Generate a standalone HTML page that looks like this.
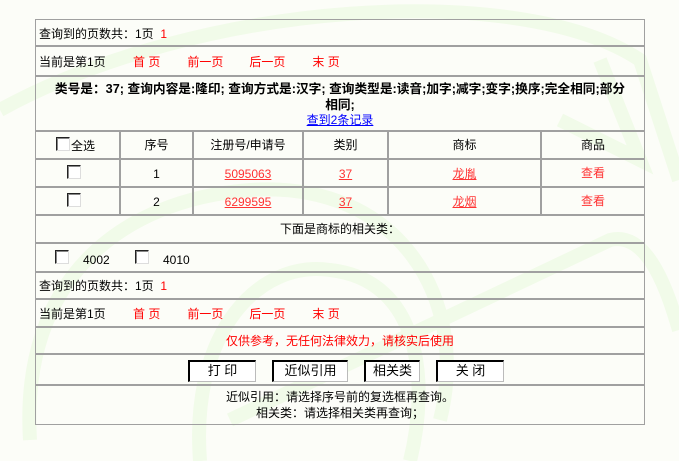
<!DOCTYPE html>
<html><head><meta charset="utf-8"><style>
*{margin:0;padding:0;box-sizing:border-box}
body{width:679px;height:461px;background:#fcfdf8;position:relative;overflow:hidden;font:12px "Liberation Sans","Noto Sans CJK SC","WenQuanYi Zen Hei",sans-serif;color:#000}
.h{position:absolute;left:35px;width:610px;height:2px;background:#a0a0a0}
.v{position:absolute;width:2px;background:#a0a0a0}
.t{position:absolute;white-space:nowrap;line-height:14px}
.r{color:#f00}
.a{color:#f33;text-decoration:underline}
.cb{position:absolute;width:14px;height:14px;border-top:1px solid #222;border-left:1px solid #222;border-right:1px solid #ddd;border-bottom:1px solid #ddd;background:#fff;box-shadow:inset 1px 1px 0 #888}
.btn{position:absolute;height:22px;border-top:2px solid #000;border-left:2px solid #000;border-right:1px solid #bbb;border-bottom:1px solid #bbb;background:#fff;text-align:center;line-height:17px;font-size:13px}
.c{text-align:center}
</style></head><body>
<svg width="679" height="461" style="position:absolute;left:0;top:0" fill="none" stroke="#f1fbe9" stroke-width="14">
<path d="M0 110 C200 0 520 -20 640 60 L679 180"/>
<path d="M30 440 C20 280 120 200 250 190 C400 180 470 300 440 420"/>
<path d="M200 461 C190 330 260 260 330 270 C420 280 430 380 410 461"/>
<path d="M230 420 L610 240 C650 230 670 300 679 330"/>
<path d="M560 120 L640 160 L600 60"/>
</svg>
<div class="h" style="top:19px;height:1px"></div>
<div class="h" style="top:45px"></div>
<div class="h" style="top:75px"></div>
<div class="h" style="top:130px"></div>
<div class="h" style="top:158px"></div>
<div class="h" style="top:186px"></div>
<div class="h" style="top:214px"></div>
<div class="h" style="top:242px"></div>
<div class="h" style="top:271px"></div>
<div class="h" style="top:298px"></div>
<div class="h" style="top:326px"></div>
<div class="h" style="top:353px"></div>
<div class="h" style="top:384px"></div>
<div class="h" style="top:424px;height:1px"></div>
<div class="v" style="left:35px;top:19px;height:406px;width:1px"></div>
<div class="v" style="left:644px;top:19px;height:406px;width:1px"></div>
<div class="v" style="left:119px;top:130px;height:85px"></div>
<div class="v" style="left:192px;top:130px;height:85px"></div>
<div class="v" style="left:302px;top:130px;height:85px"></div>
<div class="v" style="left:387px;top:130px;height:85px"></div>
<div class="v" style="left:540px;top:130px;height:85px"></div>

<div class="t" style="left:39px;top:27px">查询到的页数共：1页 <span class="r">&nbsp;1</span></div>
<div class="t" style="left:39px;top:55px">当前是第1页 <span class="r" style="margin-left:24px">首 页</span><span class="r" style="margin-left:27px">前一页</span><span class="r" style="margin-left:26px">后一页</span><span class="r" style="margin-left:27px">末 页</span></div>
<div class="t c" style="left:36px;width:608px;top:81px;font-weight:bold;font-size:12.7px;line-height:16px">类号是：37; 查询内容是:隆印; 查询方式是:汉字; 查询类型是:读音;加字;减字;变字;换序;完全相同;部分<br>相同;</div>
<div class="t c" style="left:36px;width:608px;top:113px;color:#00f;text-decoration:underline"><span>查到2条记录</span></div>

<div class="cb" style="left:56px;top:137px"></div><div class="t" style="left:71px;top:139px">全选</div>
<div class="t c" style="left:121px;width:71px;top:138px">序号</div>
<div class="t c" style="left:194px;width:108px;top:138px">注册号/申请号</div>
<div class="t c" style="left:304px;width:83px;top:138px">类别</div>
<div class="t c" style="left:389px;width:151px;top:138px">商标</div>
<div class="t c" style="left:542px;width:102px;top:138px">商品</div>

<div class="cb" style="left:67px;top:165px"></div>
<div class="t c" style="left:121px;width:71px;top:167px">1</div>
<div class="t c" style="left:194px;width:108px;top:167px"><span class="a">5095063</span></div>
<div class="t c" style="left:304px;width:83px;top:167px"><span class="a">37</span></div>
<div class="t c" style="left:389px;width:151px;top:167px"><span class="a">龙胤</span></div>
<div class="t c" style="left:542px;width:102px;top:166px;color:#f33">查看</div>

<div class="cb" style="left:67px;top:193px"></div>
<div class="t c" style="left:121px;width:71px;top:195px">2</div>
<div class="t c" style="left:194px;width:108px;top:195px"><span class="a">6299595</span></div>
<div class="t c" style="left:304px;width:83px;top:195px"><span class="a">37</span></div>
<div class="t c" style="left:389px;width:151px;top:195px"><span class="a">龙烟</span></div>
<div class="t c" style="left:542px;width:102px;top:194px;color:#f33">查看</div>

<div class="t c" style="left:36px;width:608px;top:222px">下面是商标的相关类：</div>
<div class="cb" style="left:55px;top:250px"></div><div class="t" style="left:83px;top:253px">4002</div>
<div class="cb" style="left:135px;top:250px"></div><div class="t" style="left:163px;top:253px">4010</div>

<div class="t" style="left:39px;top:279px">查询到的页数共：1页 <span class="r">&nbsp;1</span></div>
<div class="t" style="left:39px;top:307px">当前是第1页 <span class="r" style="margin-left:24px">首 页</span><span class="r" style="margin-left:27px">前一页</span><span class="r" style="margin-left:26px">后一页</span><span class="r" style="margin-left:27px">末 页</span></div>
<div class="t c r" style="left:36px;width:608px;top:334px">仅供参考，无任何法律效力，请核实后使用</div>

<div class="btn" style="left:188px;top:360px;width:68px">打 印</div>
<div class="btn" style="left:272px;top:360px;width:76px">近似引用</div>
<div class="btn" style="left:364px;top:360px;width:56px">相关类</div>
<div class="btn" style="left:436px;top:360px;width:68px">关 闭</div>

<div class="t c" style="left:36px;width:608px;top:390px">近似引用：请选择序号前的复选框再查询。</div>
<div class="t c" style="left:36px;width:608px;top:406px">相关类：请选择相关类再查询；</div>
</body></html>
